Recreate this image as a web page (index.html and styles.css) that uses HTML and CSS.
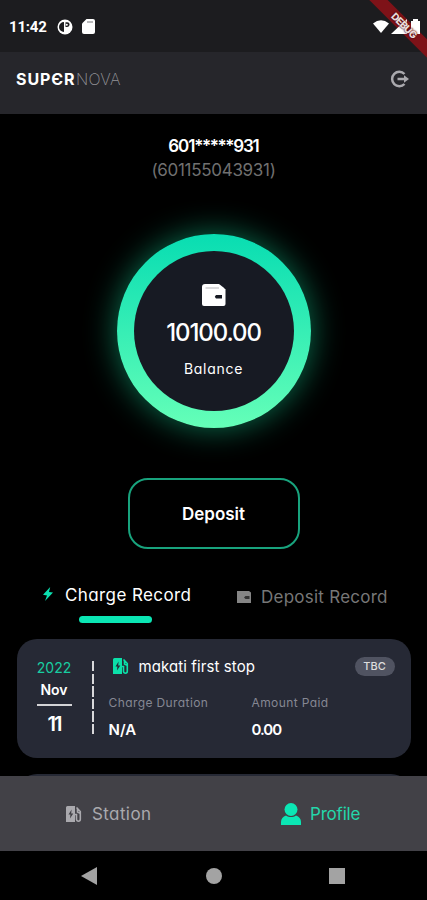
FILE: index.html
```html
<!DOCTYPE html>
<html lang="en">
<head>
<meta charset="utf-8">
<title>Supernova</title>
<link rel="stylesheet" href="styles.css">
</head>
<body>
<svg class="defs" aria-hidden="true">
  <symbol id="wallet" viewBox="0 0 24 22">
    <path fill="currentColor" d="M3 0h14l4.500 3.500 2 2v14.500a2 2 0 0 1-2 2H2a2 2 0 0 1-2-2V3a3 3 0 0 1 3-3z"/>
    <path class="crease" d="M3.500 3.500h13.500v1H3.500z"/>
    <path class="cut" d="M14 11h6v3.500h-6l-1.200-1.800z"/>
  </symbol>
  <symbol id="station" viewBox="0 0 16 16">
    <path fill="currentColor" fill-rule="evenodd" d="M1.500 0H9v16H0V1.500A1.500 1.500 0 0 1 1.500 0zM5.600 3.500 2.500 8.500h1.900L4 12.500l3.300-5H5.200z"/>
    <path fill="none" stroke="currentColor" stroke-width="1.600" d="M9 8.500h1.500v4.800a1.900 1.900 0 0 0 3.800 0V5.500L10.500 1.500M11.500 3v3l2.500 1.200"/>
  </symbol>
</svg>
<div class="phone">
  <div class="status">
    <span class="time">11:42</span>
    <svg class="badge" width="16" height="16" viewBox="0 0 16 16"><circle cx="8" cy="8" r="7.500" fill="#fff"/><path d="M7 3v10A5 5 0 0 1 7 3zM8.500 3.200h1.700a2.400 2.400 0 0 1 0 4.800H8.500z" fill="#1c1c1f"/><circle cx="9.800" cy="5.700" r="1" fill="#fff"/></svg>
    <svg class="sd" width="13" height="15" viewBox="0 0 13 15"><path d="M4.500 0H11a2 2 0 0 1 2 2v11a2 2 0 0 1-2 2H2a2 2 0 0 1-2-2V4.500z" fill="#fff"/><path d="M5 3h6" stroke="#77777a"/></svg>
    <div class="ribbon"></div>
    <svg class="signals" width="48" height="16" viewBox="0 0 48 16" fill="#fff"><path d="M0 4.500Q8-1.800 16 4.500L8 14z"/><path d="M18 15 34 0v15z"/><path d="M38 2h2V0h5v2h2v13h-9z"/></svg>
    <div class="ribbon text">DEBUG</div>
  </div>
  <header class="header">
    <div class="logo"><b>SUPЄR</b><span>NOVA</span></div>
    <svg width="20" height="18" viewBox="0 0 20 18" fill="none" stroke="#aaa9ae" stroke-width="2.500"><path d="M14.500 4A7.200 7.200 0 1 0 14.500 14"/><path d="M7.500 9H15"/><path d="M14 5.300 19 9l-5 3.700z" fill="#aaa9ae" stroke="none"/></svg>
  </header>
  <main class="main">
    <div class="user">601<span class="stars">*****</span>931</div>
    <div class="number">(601155043931)</div>
    <div class="ring">
      <div class="disc">
        <svg class="wallet" width="24" height="22"><use href="#wallet"/></svg>
        <div class="amount">10100.00</div>
        <div class="balance">Balance</div>
      </div>
    </div>
    <button class="deposit">Deposit</button>
    <div class="tabs">
      <div class="tab active">
        <svg width="10" height="14" viewBox="0 0 10 14"><path d="M7.200 0 0 7.800l4 .7L2 14l8-8.400-4-.6z" fill="#0be0b0"/></svg>
        <span>Charge Record</span>
      </div>
      <div class="tab idle">
        <svg width="14" height="12" viewBox="0 0 14 12"><path d="M0 0h12l2 1.500V12H0z" fill="#858585"/><path d="M8.500 5h4v3h-4L7 6.500z" fill="#333"/></svg>
        <span>Deposit Record</span>
      </div>
    </div>
    <section class="card">
      <div class="date">
        <div class="year">2022</div>
        <div class="month">Nov</div>
        <div class="day">11</div>
      </div>
      <div class="divider"></div>
      <div class="details">
        <div class="place">
          <svg width="16" height="16"><use href="#station"/></svg>
          <span class="name">makati first stop</span>
          <span class="tag">TBC</span>
        </div>
        <div class="facts">
          <div><div class="label">Charge Duration</div><div class="value">N/A</div></div>
          <div><div class="label">Amount Paid</div><div class="value paid">0.00</div></div>
        </div>
      </div>
    </section>
    <section class="card next"></section>
  </main>
  <nav class="nav">
    <div class="item station"><svg width="16" height="16"><use href="#station"/></svg><span>Station</span></div>
    <div class="item profile"><svg width="20" height="22" viewBox="0 0 20 22" fill="#0be6b4"><circle cx="10" cy="6.500" r="6.500"/><path d="M0 22v-3c0-3 2-5.500 5-6.500 3 2 7 2 10 0 3 1 5 3.500 5 6.500v3z"/></svg><span>Profile</span></div>
  </nav>
  <div class="system">
    <svg width="16" height="18" viewBox="0 0 16 18"><path d="M0 9 16 0v18z" fill="#a3a3a3"/></svg>
    <i class="home"></i>
    <i class="recent"></i>
  </div>
</div>
</body>
</html>
```
FILE: styles.css
```css
* { box-sizing: border-box; }
body { margin: 0; background: #000; color: #fff; font-family: Inter, sans-serif; font-feature-settings: "cv11"; }
.defs { display: none; }
.cut { fill: #171a23; }
.crease { fill: #b5b5b8; }
svg { display: block; flex: none; }
.phone { width: 427px; height: 900px; overflow: hidden; display: flex; flex-direction: column; }

.status { position: relative; height: 52px; flex: none; background: #1c1c1f; display: flex; align-items: center; padding: 1px 6px 0 9px; }
.time { font: 700 15px/20px Roboto, sans-serif; width: 48px; letter-spacing: -.2px; }
.sd { margin-left: 9px; }
.signals { margin-left: auto; position: relative; }
.ribbon { position: absolute; left: 344px; top: 19px; width: 120px; height: 13px; background: #7e1218; transform: rotate(45deg); text-align: center; font-size: 10px; line-height: 13px; font-weight: 800; letter-spacing: -.7px; color: #eadada; }
.text { background: none; text-shadow: 0 0 2px #400, 0 0 1px #622; }

.header { height: 62px; flex: none; background: #26262b; display: flex; align-items: center; justify-content: space-between; padding: 0 17px 8px 16px; }
.logo { font-size: 16px; line-height: 20px; display: flex; }
.logo b { width: 60px; letter-spacing: .9px; }
.logo span { font-weight: 200; color: #929297; letter-spacing: .3px; }

.main { height: 662px; flex: none; overflow: hidden; display: flex; flex-direction: column; align-items: center; padding-top: 20px; }
.user { font-size: 17px; line-height: 24px; font-weight: 600; letter-spacing: -1.1px; white-space: nowrap; }
.stars { letter-spacing: -1.4px; }
.number { font-size: 17px; line-height: 24px; color: #707070; letter-spacing: -.3px; }
.ring { width: 194px; height: 194px; margin-top: 52px; flex: none; border-radius: 50%; padding: 17px; background: linear-gradient(#08ddb2, #65ffb8); box-shadow: 0 0 32px rgba(20, 210, 150, .55); }
.disc { height: 160px; border-radius: 50%; background: #171a23; display: flex; flex-direction: column; align-items: center; padding-top: 33px; }
.amount { font-size: 24px; line-height: 30px; font-weight: 500; margin-top: 12px; letter-spacing: -1.1px; }
.balance { font-size: 14px; line-height: 20px; margin-top: 11px; letter-spacing: .7px; }
.deposit { flex: none; width: 172px; height: 71px; margin-top: 50px; background: #000; border: 2px solid #18a37d; border-radius: 20px; color: #fff; font: 600 17px/20px Inter, sans-serif; font-feature-settings: "cv11"; }
.tabs { width: 427px; height: 90px; flex: none; display: flex; padding-left: 43px; }
.tab { display: flex; position: relative; font-size: 17px; line-height: 24px; white-space: nowrap; letter-spacing: .4px; }
.active { width: 194px; padding-top: 34px; gap: 12px; }
.active svg { margin-top: 4px; }
.active::after { content: ""; position: absolute; left: 36px; top: 67px; width: 73px; height: 7px; border-radius: 4px; background: #0be6b4; }
.idle { padding-top: 36px; gap: 10px; color: #777; letter-spacing: .25px; }
.idle svg { margin-top: 6px; }

.card { width: 394px; height: 119px; flex: none; border-radius: 20px; background: #262935; display: flex; padding: 18px 16px 0 20px; }
.next { margin-top: 16px; }
.date { width: 35px; text-align: center; white-space: nowrap; }
.year { font-size: 14px; line-height: 22px; color: #18cda1; }
.month { font-size: 14px; line-height: 22px; font-weight: 600; padding-bottom: 4px; height: 27px; border-bottom: 2px solid #d3d3d6; }
.day { font-size: 20px; line-height: 36px; font-weight: 600; letter-spacing: -2px; }
.divider { width: 2px; height: 75px; margin: 4px 15px 0 20px; background: repeating-linear-gradient(#d8d8da 0 10.500px, transparent 10.500px 12.600px); }
.details { flex: 1; min-width: 0; }
.place { display: flex; align-items: center; height: 18px; padding-left: 4px; color: #0be0a9; }
.name { color: #fff; font-size: 15px; margin-left: 10px; white-space: nowrap; letter-spacing: .1px; }
.tag { margin-left: auto; width: 40px; height: 19px; border-radius: 10px; background: #505361; color: #ddd; font-size: 11px; line-height: 19px; font-weight: 500; text-align: center; }
.facts { display: grid; grid-template-columns: 143px 1fr; padding-top: 18px; }
.label { font-size: 12px; line-height: 20px; color: #858793; letter-spacing: .4px; }
.value { font-size: 15px; line-height: 22px; font-weight: 600; margin-top: 6px; }
.paid { letter-spacing: -1px; }

.nav { height: 75px; flex: none; background: #424147; display: flex; align-items: center; padding: 0 0 0 66px; font-size: 17px; }
.item { display: flex; align-items: center; white-space: nowrap; }
.station { width: 215px; gap: 10px; color: #aaa9ae; letter-spacing: .4px; }
.profile { gap: 9px; color: #24d6aa; letter-spacing: -.2px; }
.system { height: 49px; flex: none; display: flex; align-items: center; padding-left: 81px; }
.home { width: 16px; height: 16px; border-radius: 50%; background: #a3a3a3; margin-left: 109px; }
.recent { width: 16px; height: 16px; background: #a3a3a3; margin-left: 107px; }
```
